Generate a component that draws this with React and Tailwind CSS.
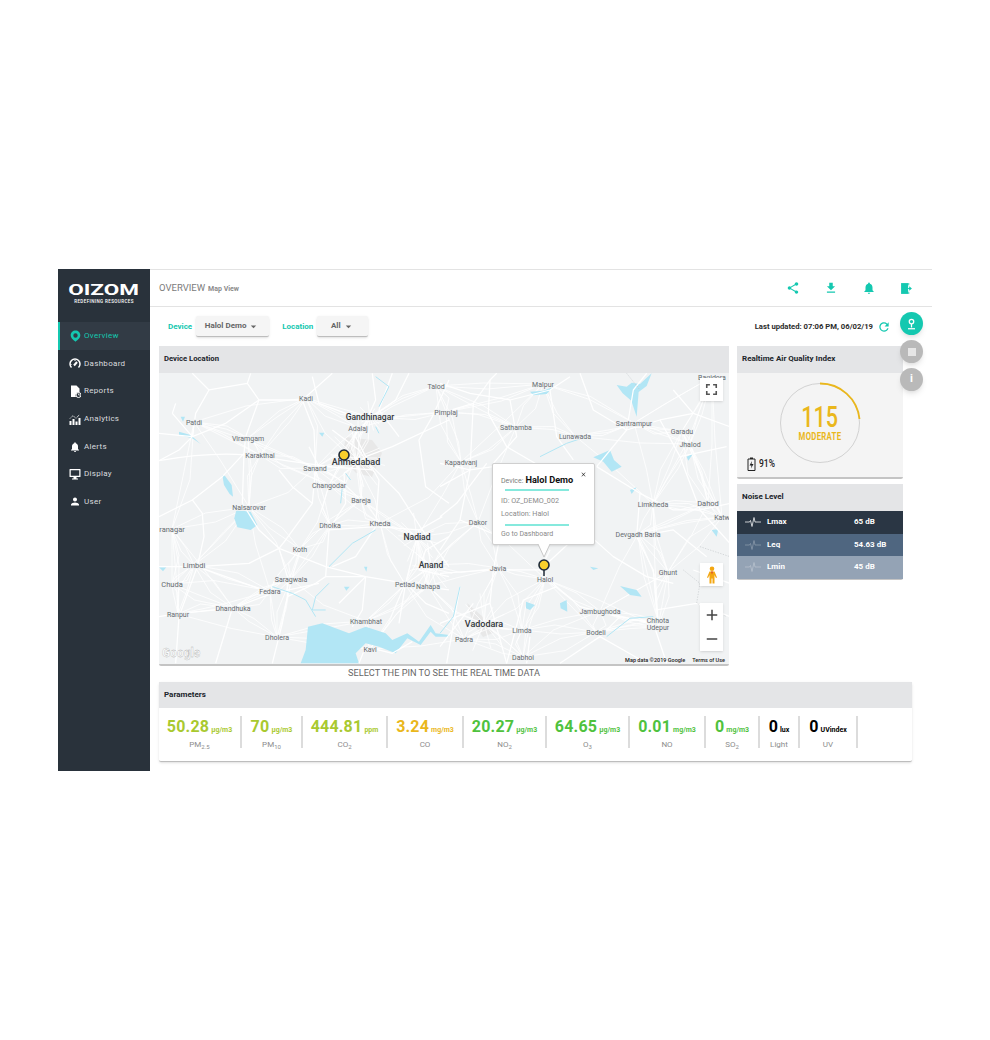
import React from 'react';
import {
    MdShare, MdFileDownload, MdNotifications, MdRefresh, MdPerson,
    MdArrowDropDown, MdClose, MdFullscreen, MdAdd, MdRemove
} from 'react-icons/md';

const OverviewIcon = () => (
    <svg width="11" height="12" viewBox="0 0 24 26"><path fill="#14c8b0" fillRule="evenodd" d="M12 1C6 1 1.5 5.6 1.5 11.5 1.5 18 8 22 12 25.5 16 22 22.5 18 22.5 11.5 22.5 5.600 18 1 12 1zm0 6a4.800 4.800 0 1 1 0 9.600A4.800 4.800 0 0 1 12 7z" /></svg>
);
const GaugeIcon = () => (
    <svg width="12" height="11" viewBox="0 0 24 22" fill="none" stroke="#fff" strokeWidth="3"><path d="M5 19A10 10 0 1 1 19 19" /><path d="M10 15l6-7" strokeWidth="4" /><path d="M3 13h2M12 4v2" strokeWidth="2" /></svg>
);
const ReportIcon = () => (
    <svg width="11" height="13" viewBox="0 0 22 26"><path fill="#fff" d="M2 1h11l6 6v8a6 6 0 0 0-7 9H2z" /><circle cx="17" cy="20" r="5" fill="none" stroke="#fff" strokeWidth="2" /><path d="M17 17v3h3" fill="none" stroke="#fff" strokeWidth="1.5" /></svg>
);
const AnalyticsIcon = () => (
    <svg width="12" height="12" viewBox="0 0 24 24"><path fill="#fff" d="M1 16h4v8H1zM7 12h4v12H7zM13 17h4v7h-4zM19 10h4v14h-4z" /><path d="M2 11l6-6 6 6 7-8" fill="none" stroke="#fff" strokeWidth="2" strokeDasharray="2 1.5" /></svg>
);
const DisplayIcon = () => (
    <svg width="12" height="12" viewBox="0 0 24 24"><path fill="#fff" fillRule="evenodd" d="M2 2h20a1 1 0 0 1 1 1v14a1 1 0 0 1-1 1h-7v3h3v2H6v-2h3v-3H2a1 1 0 0 1-1-1V3a1 1 0 0 1 1-1zm1.500 2.500v11h17v-11z" /></svg>
);
const ExitIcon = () => (
    <svg width="13" height="13" viewBox="0 0 24 24" fill="#14c8b0"><path d="M2 2h13v20H2z" /><path d="M17 8l5 4-5 4v-3h-2v-2h2z" /><path d="M17 2v4h-1.500V2zM17 18v4h-1.500v-4z" /></svg>
);
const BatteryIcon = () => (
    <svg width="9" height="14" viewBox="0 0 18 28"><path fill="none" stroke="#222" strokeWidth="2" d="M2 4h14v23H2z" /><path fill="#222" d="M6 1h6v3H6zM10 8l-5 9h4l-1 6 5-9H9z" /></svg>
);
const WaveIcon = ({ opacity }) => (
    <svg width="16" height="10" viewBox="0 0 32 20" fill="none" stroke="#fff" strokeWidth="1.5" opacity={opacity}><path d="M0 10h9l2-3 3 12 4-18 2 9h12" /></svg>
);
const PegMan = () => (
    <svg width="12" height="18" viewBox="0 0 12 18"><circle cx="6" cy="2.800" r="2.300" fill="#f3a712" /><path fill="#f3a712" d="M3.500 5.500h5L11 11.500l-1 .5-1.500-3V17.500H6.500V12.500h-1V17.500H3.500V9L2 12l-1-.5z" /><path fill="#d9442f" d="M5 5.500h2L6 8.500z" /></svg>
);
const Pin = ({ stem }) => (
    <svg width="14" height="19" viewBox="0 0 14 19">{stem && <path d="M7 12v6" stroke="#1f2a37" strokeWidth="1.5" />}<circle cx="7" cy="7" r="5" fill="#f8cf2c" stroke="#1f2a37" strokeWidth="1.6" /></svg>
);
const FabPinIcon = () => (
    <svg width="11" height="12" viewBox="0 0 22 24" fill="none" stroke="#fff" strokeWidth="2.5"><circle cx="11" cy="7" r="4.500" /><path d="M11 12v7" /><path d="M4 21.500h14" /></svg>
);

const navItems = [
    { label: 'Overview', icon: <OverviewIcon />, active: true },
    { label: 'Dashboard', icon: <GaugeIcon /> },
    { label: 'Reports', icon: <ReportIcon /> },
    { label: 'Analytics', icon: <AnalyticsIcon /> },
    { label: 'Alerts', icon: <MdNotifications size={14} color="#fff" /> },
    { label: 'Display', icon: <DisplayIcon /> },
    { label: 'User', icon: <MdPerson size={15} color="#fff" /> },
];

const params = [
    { w: 'w-[83px]', value: '50.28', unit: 'µg/m3', name: 'PM', sub: '2.5', color: 'text-[#a9c92f]' },
    { w: 'w-[61px]', value: '70', unit: 'µg/m3', name: 'PM', sub: '10', color: 'text-[#a9c92f]' },
    { w: 'w-[85px]', value: '444.81', unit: 'ppm', name: 'CO', sub: '2', color: 'text-[#a9c92f]' },
    { w: 'w-[76px]', value: '3.24', unit: 'mg/m3', name: 'CO', color: 'text-[#eab71c]' },
    { w: 'w-[83px]', value: '20.27', unit: 'µg/m3', name: 'NO', sub: '2', color: 'text-[#4fc23d]' },
    { w: 'w-[83px]', value: '64.65', unit: 'µg/m3', name: 'O', sub: '3', color: 'text-[#4fc23d]' },
    { w: 'w-[76px]', value: '0.01', unit: 'mg/m3', name: 'NO', color: 'text-[#4fc23d]' },
    { w: 'w-[54px]', value: '0', unit: 'mg/m3', name: 'SO', sub: '2', color: 'text-[#4fc23d]' },
    { w: 'w-[40px]', value: '0', unit: 'lux', name: 'Light', color: 'text-black' },
    { w: 'w-[58px]', value: '0', unit: 'UVindex', name: 'UV', color: 'text-black' },
];

const noise = [
    { name: 'Lmax', value: '65 dB', bg: 'bg-[#2a3644]', opacity: 1 },
    { name: 'Leq', value: '54.63 dB', bg: 'bg-[#4f6680]', opacity: 0.35 },
    { name: 'Lmin', value: '45 dB', bg: 'bg-[#94a3b5]', opacity: 0.35 },
];

// [label, x, y, size, weight]
const mapLabels = [
    ['Kadi', 147, 25], ['Talod', 277, 13], ['Pimplaj', 287, 39], ['Patdi', 35, 49], ['Gandhinagar', 211, 44, 8.5, 500],
    ['Adalaj', 199, 55], ['Viramgam', 89, 65], ['Karakthal', 101, 82], ['Ahmedabad', 197, 89, 9, 500], ['Sanand', 156, 95],
    ['Changodar', 170, 112], ['Bareja', 202, 127], ['Nalsarovar', 90, 134], ['Dholka', 171, 152], ['Kheda', 221, 150, 7.5],
    ['Nadiad', 258, 164, 8.5, 500], ['ranagar', 13, 156, 7.5], ['Koth', 141, 176], ['Limbdi', 35, 192, 7.5], ['Anand', 272, 192, 8.5, 500],
    ['Chuda', 13, 211, 7.5], ['Saragwala', 132, 206], ['Fedara', 111, 218], ['Petlad', 246, 211], ['Nahapa', 269, 213],
    ['Ranpur', 19, 241], ['Dhandhuka', 74, 235], ['Khambhat', 207, 248], ['Dholera', 118, 264], ['Kavi', 211, 276],
    ['Malpur', 384, 11], ['Bagidora', 553, 4], ['Sathamba', 357, 54], ['Santrampur', 475, 50], ['Garadu', 523, 58],
    ['Lunawada', 416, 63], ['Jhalod', 531, 71], ['Kapadvanj', 302, 89], ['Limkheda', 494, 131], ['Dahod', 549, 130, 7.5],
    ['Katw', 563, 144], ['Dakor', 319, 149], ['Devgadh Baria', 479, 161], ['Javla', 339, 195], ['Ghunt', 509, 199],
    ['Halol', 386, 206], ['Jambughoda', 441, 238], ['Chhota', 499, 247], ['Udepur', 499, 254], ['Vadodara', 325, 251, 9, 500],
    ['Limda', 363, 257], ['Bodeli', 437, 259], ['Padra', 305, 266], ['Dabhoi', 364, 284],
];

const leftRoads = [
    'M100 10L150 60 110 130 100 200 60 240 0 272', 'M0 272C100 255 200 250 260 255S420 280 520 290',
    'M150 60L265 40 300 90 430 90 520 10', 'M265 40L275 10', 'M430 90L465 180 470 290 460 400 380 510 360 535',
    'M300 90L260 200 255 250 250 400', 'M0 440L100 390 190 320 255 250', 'M100 390L130 430 135 500 115 590 60 740 50 880',
    'M0 590L115 590 270 580 360 535 500 590 620 620 740 640', 'M360 535L385 620 385 680 370 760 340 880', 'M115 590L200 620 340 670',
    'M0 740L60 730 220 715 340 670 480 640', 'M220 715L170 880', 'M385 680L470 640 500 620 510 480 560 400 555 310',
    'M555 310L620 260 700 230 870 150', 'M640 290L720 370 790 480 870 590', 'M590 200L620 260 660 330 650 470', 'M640 10L650 90 600 200',
    'M700 10L660 120 720 200', 'M750 10L710 90 640 140', 'M520 180L600 240 640 300', 'M650 470L780 480 850 440', 'M510 480L650 470',
    'M780 480L760 560 740 640 720 760', 'M650 470L590 560 520 590', 'M870 30L820 140 780 210 800 350 870 400', 'M640 300L500 290',
    'M500 620L620 620 610 720 580 770', 'M720 640L870 660', 'M740 640L800 700 870 730', 'M450 230L480 290 560 340',
    'M40 130L50 100M40 130L100 200', 'M0 190L100 200 200 160 300 90', 'M360 300L400 350 460 400', 'M250 400L300 480 360 535',
    'M460 20L480 100 560 130 640 140', 'M540 700L620 620', 'M870 500L800 540 780 600 870 620', 'M600 880L620 830 700 850 760 815',
];

const rightRoads = [
    'M0 130L100 100 150 30 170 10', 'M150 30L145 130 200 230 320 300', 'M0 40L90 70 210 90 330 60 390 20', 'M210 90L230 200 160 280',
    'M330 60L350 200 400 270', 'M100 100L90 300 60 450 0 540', 'M0 280L90 300 160 290', 'M470 290L560 180 660 150 760 130',
    'M560 180L580 60 620 10', 'M660 150L720 260 780 420 870 520', 'M720 260L860 230', 'M470 290L600 370 700 420 780 420',
    'M430 480L520 560 620 620 700 640', 'M330 540L300 600 350 650 420 710 540 740 640 760', 'M0 610L150 600 300 600 430 480',
    'M60 450L180 500 160 600 150 700 200 880', 'M350 650L250 690 200 880', 'M540 740L480 800 360 880', 'M640 760L680 880',
    'M600 370L590 500 640 600 650 720', 'M0 760L150 700', 'M480 800L620 880', 'M760 600L870 640', 'M780 420L870 400',
    'M590 500L700 480 800 560', 'M0 350L90 300', 'M140 280L50 400 0 440', 'M420 10L460 120 560 180', 'M700 60L760 130 870 170',
    'M60 650L20 880', 'M100 700L0 830', 'M650 720L770 700 870 740', 'M270 800L260 880',
];

const lakes = [
    'M447 770L490 760 530 775 570 790 620 770 680 790 700 810 745 790 780 815 815 765 830 790 870 795 870 800 830 800 815 785 785 825 745 805 710 850 660 830 620 820 590 850 600 880 425 880 440 840z',
    'M190 315L198 318 218 345 222 380 212 372 195 345z',
    'M232 420L275 425 295 465 275 480 235 472 226 445z',
    'M60 185L95 195 125 222 100 205 60 195z', 'M65 140L78 140 72 155z', 'M480 188L496 188 490 200z', 'M555 650L572 650 562 662z', 'M615 590L625 590 622 605z', 'M0 592L22 592 12 604z',
];
const rightLakes = [
    'M530 45L560 50 575 38 600 42 635 10 620 48 596 66 590 140 574 92 548 70z', 'M460 262L510 240 522 270 545 290 515 305 490 275z',
    'M270 65L310 62 340 50 320 72 280 76z', 'M258 695L285 705 270 720 258 715z', 'M540 648L590 660 605 680 570 675z',
    'M360 700L380 690 382 725 362 715z', 'M740 260L760 250 745 272z', 'M815 480L835 478 830 500z', 'M570 360L590 352 575 372z', 'M450 590L475 595 460 600z',
];

// thin side roads: every town gets joined to its nearest neighbours, with a small fixed kink
const sideRoads = mapLabels.flatMap(([, x, y], i) => {
    const near = mapLabels
        .map(([, nx, ny], j) => ({ nx, ny, j, d: (nx - x) ** 2 + (ny - y) ** 2 }))
        .filter((n) => n.j !== i)
        .sort((a, b) => a.d - b.d)
        .slice(0, 6);
    return near.map(({ nx, ny, j }) => {
        const kx = (x + nx) / 2 + (((i * 7 + j * 13) % 17) - 8);
        const ky = (y + ny) / 2 + (((i * 11 + j * 5) % 15) - 7);
        return `M${x} ${y}L${kx} ${ky} ${nx} ${ny}`;
    });
});

// street webs round the bigger towns
const cityWebs = [[197, 85, 30], [258, 165, 22], [272, 195, 22], [325, 250, 26], [211, 44, 14]].flatMap(([cx, cy, r]) =>
    Array.from({ length: 12 }, (_, i) => {
        const a = (i / 12) * Math.PI * 2 + i * 0.13;
        const len = r * (0.7 + ((i * 5) % 4) * 0.15);
        return `M${cx} ${cy}L${(cx + Math.cos(a) * len).toFixed(1)} ${(cy + Math.sin(a) * len).toFixed(1)}`;
    })
);

function MapCanvas() {
    return (
        <svg width="570" height="291" viewBox="0 0 570 291" className="block">
            <rect width="570" height="291" fill="#f1f3f4" />
            <path d="M187 64L213 67 223 80 213 104 197 100 183 84z" fill="#e8e8e8" />
            <path d="M308 230L324 244 334 260 324 264 314 250z" fill="#e8e8e8" />
            <g fill="none" stroke="#fff" strokeWidth="0.8">
                {sideRoads.map((d, i) => <path key={i} d={d} />)}
                {cityWebs.map((d, i) => <path key={i} d={d} />)}
            </g>
            <g transform="translate(0,-3) scale(0.3333)">
                {lakes.map((d) => <path key={d} d={d} fill="#b2e6f5" />)}
                <g fill="none" stroke="#fff" strokeWidth="3.8" strokeLinejoin="round">
                    {leftRoads.map((d) => <path key={d} d={d} />)}
                </g>
                <g fill="none" stroke="#b2e6f5" strokeWidth="3">
                    <path d="M650 20L690 50 660 110M650 170L660 190M550 350L545 400M560 310L575 330M650 480L580 520 510 590M510 640L470 680 460 720 500 720M340 650L400 670 440 690 470 740" />
                </g>
            </g>
            <g transform="translate(281,-3) scale(0.3333)">
                {rightLakes.map((d) => <path key={d} d={d} fill="#b2e6f5" />)}
                <g fill="none" stroke="#fff" strokeWidth="3.8" strokeLinejoin="round">
                    {rightRoads.map((d) => <path key={d} d={d} />)}
                </g>
                <g fill="none" stroke="#b2e6f5" strokeWidth="3">
                    <path d="M300 260L380 220 440 200M500 800L570 745 640 740M60 650L40 740 0 790" />
                </g>
                <path d="M730 600L780 640 770 700 860 740M780 530L870 560M560 10L600 60" fill="none" stroke="#c4c8cc" strokeWidth="2" strokeDasharray="4 4" />
            </g>
            <g textAnchor="middle">
                {mapLabels.map(([label, x, y, size, weight]) => (
                    <text key={label} x={x} y={y + 3} fontSize={size || 7} fontWeight={weight || 400} fill={weight ? '#33373b' : '#666b70'} stroke="#f1f3f4" strokeWidth="1.5" paintOrder="stroke">{label}</text>
                ))}
            </g>
        </svg>
    );
}

function MapCard() {
    return (
        <div className="w-[570px] rounded-[2px] border-b-2 border-[#c4c4c4] bg-white">
            <div className="flex h-[27px] items-center bg-[#e4e5e7] px-[5px] pb-[2px] text-[7.7px] font-bold text-[#20242a]">Device Location</div>
            <div className="relative h-[291px] overflow-hidden">
                <MapCanvas />

                <div className="absolute left-[178px] top-[75px]"><Pin /></div>
                <div className="absolute left-[378px] top-[185px]"><Pin stem /></div>

                {/* popup */}
                <div className="absolute left-[333px] top-[90px] h-[82px] w-[103px] rounded-[2px] border border-[#cfcfcf] bg-white pl-[8px] pt-[11px] shadow-sm">
                    <MdClose size={7} className="absolute right-[7px] top-[7px] text-[#333]" />
                    <div className="flex h-[10px] items-baseline gap-[2px] text-[7px] leading-[10px] text-[#7c7c7c]">Device: <span className="text-[9.2px] font-bold text-[#111]">Halol Demo</span></div>
                    <div className="ml-[4px] mt-[4px] h-[2px] w-[64px] bg-[#86e9dd]" />
                    <div className="mt-[5px] h-[10px] text-[7.2px] leading-[10px] text-[#8a8a8a]">ID: OZ_DEMO_002</div>
                    <div className="mt-[3px] h-[10px] text-[7.2px] leading-[10px] text-[#8a8a8a]">Location: Halol</div>
                    <div className="ml-[4px] mt-[5px] h-[2px] w-[64px] bg-[#86e9dd]" />
                    <div className="mt-[3px] h-[10px] text-[7px] leading-[10px] text-[#8a8a8a]">Go to Dashboard</div>
                </div>
                <svg width="14" height="14" viewBox="0 0 14 14" className="absolute left-[378px] top-[171px]">
                    <path d="M1 0L7 13 13 0" fill="#fff" stroke="#bcbcbc" strokeWidth="0.8" />
                </svg>

                {/* map controls */}
                <div className="absolute right-[6px] top-[5px] flex h-[23px] w-[23px] items-center justify-center bg-white shadow-sm">
                    <MdFullscreen size={19} className="text-[#555]" />
                </div>
                <div className="absolute right-[6px] top-[190px] flex h-[23px] w-[23px] items-center justify-center bg-white shadow-sm"><PegMan /></div>
                <div className="absolute right-[6px] top-[230px] flex h-[48px] w-[23px] flex-col items-center justify-around bg-white shadow-sm">
                    <MdAdd size={18} className="text-[#444]" />
                    <MdRemove size={18} className="text-[#444]" />
                </div>
                <div className="absolute bottom-[2px] left-[3px] text-[12px] font-bold text-white/80 [-webkit-text-stroke:0.3px_#aaa]">Google</div>
                <div className="absolute bottom-0 right-[4px] flex gap-[7px] text-[5.5px] font-medium text-[#222]">
                    <span>Map data ©2019 Google</span>
                    <span>Terms of Use</span>
                </div>
            </div>
        </div>
    );
}

function AqiCard() {
    return (
        <div className="h-[133px] rounded-[2px] border-b-2 border-[#c4c4c4] bg-[#f4f4f4]">
            <div className="flex h-[27px] items-center bg-[#e4e5e7] px-[5px] pb-[2px] text-[8px] font-bold text-[#20242a]">Realtime Air Quality Index</div>
            <div className="relative h-[104px]">
                <div className="flex h-full items-start justify-center pt-[9px]">
                    <div className="relative flex h-[82px] w-[82px] flex-col items-center justify-center">
                        <svg width="82" height="82" viewBox="0 0 82 82" className="absolute inset-0">
                            <circle cx="41" cy="41" r="39.5" fill="none" stroke="#d2d2d2" strokeWidth="1" />
                            <path d="M41 1.5A39.500 39.500 0 0 1 80.500 37" fill="none" stroke="#eab71c" strokeWidth="1.8" />
                        </svg>
                        <div className="scale-x-[0.72] text-[30px] font-medium leading-[25px] text-[#eab71c]">115</div>
                        <div className="mt-[3px] scale-x-[0.74] text-[10.5px] font-bold leading-[10px] tracking-[0.4px] text-[#eab71c]">MODERATE</div>
                    </div>
                </div>
                <div className="absolute bottom-[6px] left-[10px] flex items-center gap-[3px] text-[10px] font-medium text-[#222]">
                    <BatteryIcon />
                    <span className="origin-left scale-x-[0.85]">91%</span>
                </div>
            </div>
        </div>
    );
}

function NoiseCard() {
    return (
        <div className="rounded-[2px] border-b border-[#c4c4c4] bg-white">
            <div className="flex h-[27px] items-center bg-[#e4e5e7] px-[5px] pb-[2px] text-[8px] font-bold text-[#20242a]">Noise Level</div>
            {noise.map((row) => (
                <div key={row.name} className={`flex h-[22.5px] items-center text-[8px] font-bold text-white ${row.bg}`}>
                    <div className="flex w-[30px] justify-center pl-[2px]"><WaveIcon opacity={row.opacity} /></div>
                    <div className="w-[87px]">{row.name}</div>
                    <div>{row.value}</div>
                </div>
            ))}
        </div>
    );
}

export default function App() {
    return (
        <div className="h-[1040px] w-[990px] bg-white pl-[58px] pt-[269px] font-['Roboto',sans-serif]">
            <div className="flex h-[502px] w-[874px]">
                {/* Sidebar */}
                <aside className="h-full w-[92px] shrink-0 bg-[#29323b]">
                    <div className="flex h-[53px] flex-col items-center pt-[14px]">
                        <div className="scale-x-[1.5] text-[15px] font-bold leading-[15px] text-white">OIZOM</div>
                        <div className="mt-[1px] text-[4.5px] font-medium leading-[5px] tracking-[0.4px] text-white">REDEFINING RESOURCES</div>
                    </div>
                    <nav>
                        {navItems.map((item) => (
                            <div
                                key={item.label}
                                className={`flex h-[27.7px] items-center gap-[3px] border-l-2 pl-[9px] text-[8px] tracking-[0.3px] ${item.active ? 'border-[#14c8b0] bg-[#323b45] text-[#14c8b0]' : 'border-transparent text-[#d9dcdf]'}`}
                            >
                                <span className="flex w-[12px] justify-center">{item.icon}</span>
                                {item.label}
                            </div>
                        ))}
                    </nav>
                </aside>

                {/* Content */}
                <div className="relative min-w-0 flex-1">
                    <header className="flex h-[38px] items-center justify-between border-y border-[#e3e3e3] pl-[9px] pr-[19px]">
                        <div className="flex items-baseline gap-[3px] text-[#7b7b7b]">
                            <span className="text-[9.5px]">OVERVIEW</span>
                            <span className="text-[7px] font-bold text-[#8a8a8a]">Map View</span>
                        </div>
                        <div className="flex items-center gap-[24px] text-[#14c8b0]">
                            <MdShare size={14} />
                            <MdFileDownload size={14} />
                            <MdNotifications size={14} />
                            <ExitIcon />
                        </div>
                    </header>

                    <div className="flex h-[39px] items-center pl-[18px] pr-[41px]">
                        <span className="text-[8px] font-bold text-[#14c8b0]">Device</span>
                        <div className="ml-[4px] flex h-[21px] w-[73px] items-center justify-center gap-[1px] rounded-[2px] border-b border-[#bdbdbd] bg-[#f5f5f5] text-[8px] font-bold text-[#666] shadow-sm">
                            Halol Demo <MdArrowDropDown size={13} />
                        </div>
                        <span className="ml-[13px] text-[8px] font-bold text-[#14c8b0]">Location</span>
                        <div className="ml-[4px] flex h-[21px] w-[51px] items-center justify-center gap-[1px] rounded-[2px] border-b border-[#bdbdbd] bg-[#f5f5f5] text-[8px] font-bold text-[#666] shadow-sm">
                            All <MdArrowDropDown size={13} />
                        </div>
                        <div className="ml-auto flex items-center gap-[4px] text-[7.7px] font-bold text-[#2b2b2b]">
                            Last updated: 07:06 PM, 06/02/19
                            <MdRefresh size={14} className="text-[#14c8b0]" />
                        </div>
                    </div>

                    <div className="flex items-start gap-[8px] pl-[9px]">
                        <MapCard />
                        <div className="flex w-[166px] flex-col gap-[5px]">
                            <AqiCard />
                            <NoiseCard />
                        </div>
                    </div>

                    <div className="ml-[198px] h-[16px] text-[9.2px] leading-[13px] text-[#666]">SELECT THE PIN TO SEE THE REAL TIME DATA</div>

                    <section className="ml-[9px] w-[753px] rounded-[2px] border-b border-[#bdbdbd] bg-white shadow-sm">
                        <div className="flex h-[26px] items-center bg-[#e4e5e7] px-[5px] text-[8px] font-bold text-[#20242a]">Parameters</div>
                        <div className="flex h-[53px] pt-[8px]">
                            {params.map((p) => (
                                <div key={p.name + p.value} className={`${p.w} h-[32px] border-r-2 border-[#dcdcdc] text-center`}>
                                    <div className={`whitespace-nowrap text-[16px] font-bold leading-[22px] tracking-[0.2px] ${p.color}`}>
                                        {p.value}<span className="ml-[2px] text-[7px] tracking-normal">{p.unit}</span>
                                    </div>
                                    <div className="text-[8px] leading-[8px] text-[#8c8c8c]">
                                        {p.name}{p.sub && <sub className="text-[6px]">{p.sub}</sub>}
                                    </div>
                                </div>
                            ))}
                        </div>
                    </section>

                    {/* floating buttons */}
                    <div className="absolute right-[9px] top-[43px] flex flex-col gap-[5px]">
                        <div className="flex h-[23px] w-[23px] items-center justify-center rounded-full bg-[#14c8b0] shadow-md"><FabPinIcon /></div>
                        <div className="flex h-[23px] w-[23px] items-center justify-center rounded-full bg-[#b9b9b9] shadow-md"><div className="h-[8px] w-[8px] bg-[#e6e6e6]" /></div>
                        <div className="flex h-[23px] w-[23px] items-center justify-center rounded-full bg-[#b9b9b9] shadow-md"><span className="text-[11px] font-bold text-white">i</span></div>
                    </div>
                </div>
            </div>
        </div>
    );
}
